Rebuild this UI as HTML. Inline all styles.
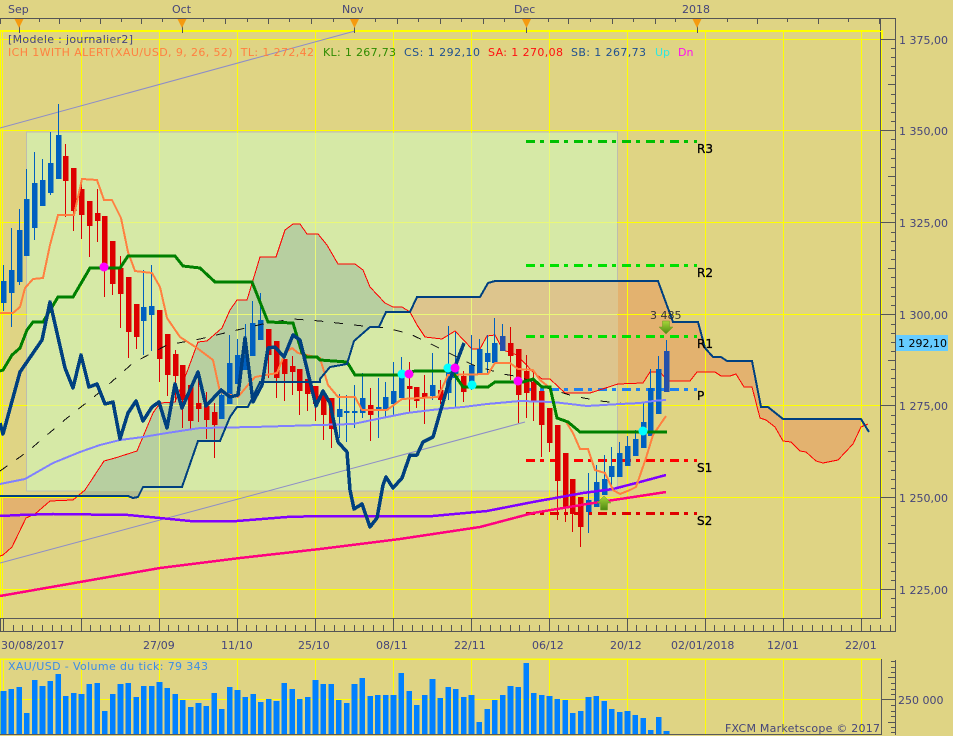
<!DOCTYPE html>
<html><head><meta charset="utf-8"><title>XAU/USD</title>
<style>html,body{margin:0;padding:0;background:#DFD484;overflow:hidden}svg{display:block}text{font-family:"DejaVu Sans","Liberation Sans",sans-serif;font-size:11px}polyline{shape-rendering:crispEdges}</style></head>
<body>
<svg width="953" height="736" viewBox="0 0 953 736" xmlns="http://www.w3.org/2000/svg">
<defs>
<clipPath id="inR"><rect x="27" y="132" width="591" height="359"/></clipPath>
<clipPath id="outR"><path clip-rule="evenodd" d="M0 31H881V618H0ZM27 132V491H618V132Z"/></clipPath>
<clipPath id="plot"><rect x="0" y="31" width="881" height="588"/></clipPath>
<linearGradient id="ag" x1="0" y1="0" x2="0" y2="1"><stop offset="0" stop-color="#a6d63a"/><stop offset="1" stop-color="#4d8a10"/></linearGradient>
<polygon id="cG" points="78,496 85,490 86,490 104,461 115,458 137,451 153,413 160,403 175,402 187,372 198,342 207,341 222,328 230,310 237,300 247,300 260,257 276,257 285,230 293,224 300,224 307,234 318,234 327,245 338,264 355,264 363,270 370,287 385,303 393,307 402,307 410,312 386,312 379,327 370,327 354,341 347,364 330,367 320,379 320,382 260,382 248,407 237,407 230,417 220,441 198,441 182,487 143,487 138,497 133,498 128,496"/>
<polygon id="cOL" points="0,496 78,496 73,500 50,501 35,514 26,518 12,547 3,555 0,556"/>
<polygon id="cOR" points="410,312 417,297 480,297 488,283 495,281 658,281 673,322 698,322 705,348 713,357 721,357 727,361 752,361 761,407 768,407 783,419 861,419 866,425 861,427 853,444 838,460 823,463 816,461 806,452 800,451 791,442 783,441 775,427 766,420 760,418 752,387 744,387 736,374 730,376 721,376 715,372 697,372 690,381 668,381 660,372 650,372 643,383 618,384 590,393 565,393 550,379 542,379 533,372 517,355 503,350 495,335 487,336 480,349 472,349 455,331 442,339 425,337 417,325"/>
</defs>
<rect width="953" height="736" fill="#DFD484"/>

<!-- overlay zone -->
<rect x="26.5" y="132" width="591" height="359" fill="#D6E9A6" stroke="#BDBDB0" stroke-width="1"/>

<!-- clouds -->
<g clip-path="url(#inR)"><use href="#cG" fill="#B7CFA0"/><use href="#cOL" fill="#DDC58D"/><use href="#cOR" fill="#DDC58D"/></g>
<g clip-path="url(#outR)"><use href="#cG" fill="#B3BD90"/><use href="#cOL" fill="#E3B26F"/><use href="#cOR" fill="#E3B26F"/></g>

<!-- grid -->
<g shape-rendering="crispEdges" fill="none">
<path stroke="#FFFF00" d="M0 39.5H880M0 130.5H880M0 222.5H880M0 314.5H880M0 405.5H880M0 497.5H880M0 589.5H880M.5 32V618M2.5 32V618M81.5 32V618M159.5 32V618M237.5 32V618M315.5 32V618M393.5 32V618M471.5 32V618M549.5 32V618M627.5 32V618M705.5 32V618M783.5 32V618M861.5 32V618"/>
<path stroke="#EAF878" d="M27 222.5H617M27 314.5H617M27 405.5H617M81.5 133V490M159.5 133V490M237.5 133V490M315.5 133V490M393.5 133V490M471.5 133V490M549.5 133V490"/>
<path stroke="#FFFF00" stroke-width="2" d="M0 31H882V40"/>
<path stroke="#FFFF00" d="M0 130.5H27"/>
<path stroke="#5A5A5A" d="M880.5 32V618.5H0"/>
<path stroke="#FFFF00" d="M881.5 32V618"/>
</g>

<!-- trend lines -->
<g fill="none" stroke="#8C8CC8" stroke-width="1">
<path d="M0 128L355 31"/>
<path d="M0 563L525 422"/>
</g>

<!-- pivot lines -->
<g fill="none" stroke-width="3" stroke-dasharray="9 5 4 6" shape-rendering="crispEdges">
<path stroke="#00C000" d="M526 141.5H697"/>
<path stroke="#00E000" d="M526 265.5H697"/>
<path stroke="#00E000" d="M526 336.5H697"/>
<path stroke="#1E80F0" d="M526 389.5H697"/>
<path stroke="#FF0000" d="M526 460.5H697"/>
<path stroke="#E00000" d="M526 513.5H697"/>
</g>

<!-- senkou A -->
<polyline fill="none" stroke="#FF0000" stroke-width="1" points="0,556 3,555 12,547 26,518 35,514 50,501 73,500 85,490 104,461 115,458 137,451 153,413 160,403 175,402 187,372 198,342 207,341 222,328 230,310 237,300 247,300 260,257 276,257 285,230 293,224 300,224 307,234 318,234 327,245 338,264 355,264 363,270 370,287 385,303 393,307 402,307 410,312 417,325 425,337 442,339 455,331 472,349 480,349 487,336 495,335 503,350 517,355 533,372 542,379 550,379 565,393 590,393 618,384 643,383 650,372 660,372 668,381 690,381 697,372 715,372 721,376 730,376 736,374 744,387 752,387 760,418 766,420 775,427 783,441 791,442 800,451 806,452 816,461 823,463 838,460 853,444 861,427 868,424"/>

<!-- candles: wicks -->
<g fill="none" shape-rendering="crispEdges" stroke-width="1">
<path stroke="#0060C0" d="M3.5 265V311M11.5 228V327M19.5 209V285M26.5 169V256M34.5 152V240M42.5 159V206M50.5 132V195M58.5 104V179M143.5 270V355M151.5 265V351M221.5 388V419M229.5 335V404M237.5 339V384M245.5 324V370M252.5 301V356M260.5 293V340M339.5 394V438M346.5 395V442M354.5 385V428M362.5 373V418M378.5 378V438M385.5 382V418M393.5 362V415M401.5 357V398M432.5 353V400M448.5 326V400M455.5 332V407M471.5 335V390M479.5 339V374M487.5 335V373M494.5 318V363M502.5 324V351M588.5 473V533M596.5 465V507M604.5 455V495M611.5 447V490M619.5 442V477M627.5 436V466M635.5 430V456M643.5 403V448M650.5 369V436M658.5 356V414M666.5 340V392"/>
<path stroke="#DD0000" d="M65.5 144V217M73.5 168V231M81.5 179V239M89.5 201V257M97.5 189V242M104.5 216V297M112.5 241V295M120.5 256V328M128.5 277V358M136.5 304V349M159.5 310V382M167.5 334V396M175.5 350V402M182.5 365V428M190.5 385V430M198.5 380V422M206.5 392V439M214.5 403V458M268.5 329V378M276.5 341V398M284.5 359V401M292.5 356V395M299.5 369V415M307.5 379V411M315.5 386V421M323.5 390V440M331.5 398V448M370.5 388V441M409.5 362V412M416.5 387V408M424.5 375V424M440.5 380V404M463.5 371V402M510.5 327V380M518.5 349V423M526.5 355V418M533.5 370V421M541.5 391V457M549.5 408V452M557.5 425V520M565.5 453V522M572.5 479V532M580.5 497V547"/>
</g>
<!-- candles: bodies -->
<g fill="none" shape-rendering="crispEdges" stroke-width="5.5">
<path stroke="#0060C0" d="M3.5 281V303M11.5 270V293M19.5 230V282M26.5 199V256M34.5 183V228M42.5 180V206M50.5 163V193M58.5 135V179M143.5 307V321M151.5 306V315M221.5 395V419M229.5 363V404M237.5 355V384M245.5 355V370M252.5 323V356M260.5 320V340M339.5 409V417M346.5 411V413M354.5 411V413M362.5 398V413M378.5 407V409M385.5 397V409M393.5 391V404M401.5 374V398M432.5 385V396M448.5 365V393M455.5 367V378M471.5 365V385M479.5 349V374M487.5 353V362M494.5 343V363M588.5 500V512M596.5 482V507M604.5 479V495M611.5 466V477M619.5 453V477M627.5 446V466M635.5 439V456M643.5 422V448M650.5 388V436M658.5 369V414"/>
<path stroke="#2550AA" d="M502.5 336V351M666.5 351V392"/>
<path stroke="#DD0000" d="M65.5 156V181M73.5 168V211M81.5 189V215M89.5 201V226M97.5 213V221M104.5 216V265M112.5 241V284M120.5 268V294M128.5 277V332M136.5 304V337M159.5 310V359M167.5 334V375M175.5 354V376M182.5 365V400M190.5 385V421M198.5 403V409M206.5 406V420M214.5 412V425M268.5 329V355M276.5 341V378M284.5 359V374M292.5 366V372M299.5 369V391M307.5 379V394M315.5 386V404M323.5 395V415M331.5 398V429M370.5 405V415M409.5 386V389M416.5 387V401M424.5 393V397M440.5 390V400M463.5 376V392M510.5 343V356M518.5 349V395M526.5 371V393M533.5 382V402M541.5 391V425M549.5 408V443M557.5 425V481M565.5 453V507M572.5 479V514M580.5 497V527"/>
</g>

<!-- dashed black -->
<polyline fill="none" stroke="#111" stroke-width="1" stroke-dasharray="9 11" points="0,471 27,452 67,418 100,392 133,363 167,345 200,339 233,331 267,323 293,319 320,321 363,326 387,328 410,334 433,345 453,355 473,365 503,374 520,377 547,388 573,396 600,401 637,405"/>

<!-- MAs -->
<polyline fill="none" stroke="#8080FF" stroke-width="2" points="0,484 25,479 53,463 80,452 100,445 120,440 143,437 167,433 200,428 253,427 320,425 353,424 377,419 407,413 440,409 463,407 487,404 520,401 553,402 587,406 620,404 640,403 653,401 666,400"/>
<polyline fill="none" stroke="#8000FF" stroke-width="2.5" points="0,516 20,515 53,514 128,515 160,518 190,521 237,521 287,517 320,516 433,516 487,511 533,502 583,493 613,489 640,482 666,475"/>
<polyline fill="none" stroke="#FF0080" stroke-width="2.5" points="0,596 80,582 160,568 240,558 320,549 400,539 480,527 533,513 587,504 640,496 666,492"/>

<!-- Tenkan -->
<polyline fill="none" stroke="#FF8040" stroke-width="2" points="0,313 13,313 20,307 25,288 33,279 43,278 50,245 58,215 74,215 80,188 82,179 97,180 104,200 112,200 121,218 128,252 135,271 152,273 160,287 167,318 180,337 197,348 213,360 220,392 238,397 248,385 255,377 277,373 285,353 292,348 298,353 320,358 328,385 338,397 355,397 362,410 387,410 402,399 438,397 448,375 488,374 495,363 510,363 518,369 533,370 540,380 550,388 557,418 565,420 573,433 580,449 588,449 595,470 605,473 613,490 620,494 630,490 636,487 646,458 653,435 666,416"/>
<!-- Kijun -->
<polyline fill="none" stroke="#008000" stroke-width="3" points="0,371 3,370 12,355 20,348 27,330 33,322 43,322 58,297 73,297 90,268 120,268 128,256 175,256 183,266 200,268 215,282 252,282 268,322 293,323 302,353 307,357 317,357 320,360 347,362 355,375 400,375 415,371 452,371 463,387 488,387 495,382 523,382 533,379 542,387 550,387 557,418 568,422 580,432 667,432"/>
<!-- Senkou B -->
<polyline fill="none" stroke="#004080" stroke-width="2" points="0,496 128,496 133,498 138,497 143,487 182,487 198,441 220,441 230,417 237,407 248,407 260,382 320,382 320,379 330,367 347,364 354,341 370,327 379,327 386,312 410,312 417,297 480,297 488,283 495,281 658,281 673,322 698,322 705,348 713,357 721,357 727,361 752,361 761,407 768,407 783,419 861,419 869,432"/>
<!-- Chikou -->
<polyline fill="none" stroke="#004080" stroke-width="3.5" stroke-linejoin="round" points="0,423 3,434 20,372 42,340 50,302 65,368 73,388 81,355 89,387 97,384 105,404 113,402 120,439 128,413 136,401 143,421 152,407 159,402 167,428 175,384 182,408 198,372 206,406 221,390 230,397 238,395 245,338 253,402 262,385 268,348 275,347 284,357 293,335 300,340 316,406 323,391 330,403 338,442 347,452 350,490 354,509 362,504 370,527 377,518 383,485 386,477 393,488 402,478 410,455 417,455 423,442 433,437 448,385 464,343"/>

<!-- signal dots -->
<circle cx="104" cy="267" r="4.5" fill="#FF00FF"/>
<circle cx="402" cy="374" r="4.5" fill="#00FFFF"/>
<circle cx="409" cy="374" r="4.5" fill="#FF00FF"/>
<circle cx="448" cy="368" r="4.5" fill="#00FFFF"/>
<circle cx="455" cy="368" r="4.5" fill="#FF00FF"/>
<circle cx="472" cy="385" r="4.5" fill="#00FFFF"/>
<circle cx="518" cy="381" r="4.5" fill="#FF00FF"/>
<circle cx="643" cy="431" r="4.5" fill="#00FFFF"/>

<!-- arrows -->
<path d="M604 496L611 503H607.5V510H600.5V503H597Z" fill="url(#ag)" stroke="#6a9a20" stroke-width=".5"/>
<path d="M666 334L673 327H669.5V321H662.5V327H659Z" fill="url(#ag)" stroke="#6a9a20" stroke-width=".5"/>
<text x="650" y="319" fill="#333">3 485</text>

<!-- pivot labels -->
<g fill="#000" stroke="#000" stroke-width=".3" style="font-size:12px">
<text x="697" y="153" style="font-size:12px">R3</text>
<text x="697" y="277" style="font-size:12px">R2</text>
<text x="697" y="348" style="font-size:12px">R1</text>
<text x="697" y="400" style="font-size:12px">P</text>
<text x="697" y="472" style="font-size:12px">S1</text>
<text x="697" y="525" style="font-size:12px">S2</text>
</g>

<!-- legend -->
<text x="8" y="43" fill="#44447E" textLength="125">[Modele : journalier2]</text>
<text x="8" y="56" fill="#FF8040" textLength="306">ICH 1WITH ALERT(XAU/USD, 9, 26, 52)&#160; TL: 1 272,42</text>
<text x="323" y="56" fill="#2E8B00" textLength="73">KL: 1 267,73</text>
<text x="404" y="56" fill="#1F5090" textLength="76">CS: 1 292,10</text>
<text x="488" y="56" fill="#FF1010" textLength="75">SA: 1 270,08</text>
<text x="571" y="56" fill="#1F5090" textLength="75">SB: 1 267,73</text>
<text x="655" y="56" fill="#30E8E0">Up</text>
<text x="678" y="56" fill="#FF10F0">Dn</text>

<!-- top axis -->
<g shape-rendering="crispEdges" fill="none" stroke="#555">
<path d="M0 18.5H895.5V631.5H0M.5 18V24M880.5 18V31"/>
<path d="M59.5 18V24M100.5 18V24M141.5 18V24M182.5 18V33M225.5 18V24M268.5 18V24M311.5 18V24M354.5 18V33M397.5 18V24M440.5 18V24M483.5 18V24M526.5 18V33M568.5 18V24M612.5 18V24M655.5 18V24M697.5 18V33M757.5 18V24M818.5 18V24M879.5 18V24M19.5 18V33"/>
<path d="M39.5 18V22M80.5 18V22M121.5 18V22M162.5 18V22M203.5 18V22M247.5 18V22M289.5 18V22M333.5 18V22M375.5 18V22M418.5 18V22M461.5 18V22M504.5 18V22M548.5 18V22M590.5 18V22M633.5 18V22M675.5 18V22M727.5 18V22M787.5 18V22M848.5 18V22"/>
</g>
<g fill="#F59A10">
<path d="M14.5 19H23.5L19 28Z"/><path d="M177.5 19H186.5L182 28Z"/><path d="M350 19H359L354.5 28Z"/><path d="M522 19H531L526.5 28Z"/><path d="M692.5 19H701.5L697 28Z"/>
</g>
<g fill="#45457A">
<text x="8" y="13">Sep</text><text x="172" y="13">Oct</text><text x="342" y="13">Nov</text><text x="514" y="13">Dec</text><text x="682" y="13">2018</text>
</g>

<!-- right axis ticks -->
<g shape-rendering="crispEdges" fill="none" stroke="#555">
<path d="M881 39.5H895M881 130.5H895M881 222.5H895M881 314.5H895M881 405.5H895M881 497.5H895M881 589.5H895"/>
<path d="M888 84.5H895M888 176.5H895M888 268.5H895M888 360.5H895M888 451.5H895M888 543.5H895"/>
<path d="M891 48.5h4M891 57.5h4M891 66.5h4M891 75.5h4M891 94.5h4M891 103.5h4M891 112.5h4M891 121.5h4M891 139.5h4M891 149.5h4M891 158.5h4M891 167.5h4M891 185.5h4M891 195.5h4M891 204.5h4M891 213.5h4M891 232.5h4M891 241.5h4M891 250.5h4M891 259.5h4M891 277.5h4M891 287.5h4M891 296.5h4M891 305.5h4M891 324.5h4M891 333.5h4M891 342.5h4M891 351.5h4M891 369.5h4M891 378.5h4M891 387.5h4M891 396.5h4M891 415.5h4M891 424.5h4M891 433.5h4M891 442.5h4M891 461.5h4M891 470.5h4M891 479.5h4M891 488.5h4M891 507.5h4M891 516.5h4M891 525.5h4M891 534.5h4M891 552.5h4M891 562.5h4M891 571.5h4M891 580.5h4M891 598.5h4M891 607.5h4M891 616.5h4"/>
</g>
<g fill="#45457A">
<text x="899" y="44">1 375,00</text>
<text x="899" y="135">1 350,00</text>
<text x="899" y="227">1 325,00</text>
<text x="899" y="319">1 300,00</text>
<text x="899" y="410">1 275,00</text>
<text x="899" y="502">1 250,00</text>
<text x="899" y="594">1 225,00</text>
</g>
<rect x="896" y="335" width="52" height="16" fill="#66CCFF"/>
<text x="898" y="347" fill="#000">1 292,10</text>

<!-- bottom axis ticks -->
<g shape-rendering="crispEdges" fill="none" stroke="#555">
<path d="M.5 618V631M3.5 618V631M81.5 618V631M159.5 618V631M237.5 618V631M315.5 618V631M393.5 618V631M471.5 618V631M549.5 618V631M627.5 618V631M705.5 618V631M783.5 618V631M861.5 618V631"/>
<path d="M13.5 625v6M22.5 625v6M32.5 625v6M42.5 625v6M52.5 625v6M61.5 625v6M71.5 625v6M90.5 625v6M100.5 625v6M110.5 625v6M120.5 625v6M129.5 625v6M139.5 625v6M149.5 625v6M168.5 625v6M178.5 625v6M188.5 625v6M198.5 625v6M207.5 625v6M217.5 625v6M227.5 625v6M246.5 625v6M256.5 625v6M266.5 625v6M276.5 625v6M285.5 625v6M295.5 625v6M305.5 625v6M324.5 625v6M334.5 625v6M344.5 625v6M354.5 625v6M363.5 625v6M373.5 625v6M383.5 625v6M402.5 625v6M412.5 625v6M422.5 625v6M432.5 625v6M441.5 625v6M451.5 625v6M461.5 625v6M480.5 625v6M490.5 625v6M500.5 625v6M510.5 625v6M519.5 625v6M529.5 625v6M539.5 625v6M558.5 625v6M568.5 625v6M578.5 625v6M588.5 625v6M597.5 625v6M607.5 625v6M617.5 625v6M636.5 625v6M646.5 625v6M656.5 625v6M666.5 625v6M675.5 625v6M685.5 625v6M695.5 625v6M714.5 625v6M724.5 625v6M734.5 625v6M744.5 625v6M753.5 625v6M763.5 625v6M773.5 625v6M792.5 625v6M802.5 625v6M812.5 625v6M822.5 625v6M831.5 625v6M841.5 625v6M851.5 625v6M870.5 625v6M880.5 625v6M890.5 625v6"/>
</g>
<g fill="#45457A">
<text x="1" y="649">30/08/2017</text>
<text x="143" y="649">27/09</text>
<text x="221" y="649">11/10</text>
<text x="298" y="649">25/10</text>
<text x="376" y="649">08/11</text>
<text x="454" y="649">22/11</text>
<text x="532" y="649">06/12</text>
<text x="610" y="649">20/12</text>
<text x="671" y="649">02/01/2018</text>
<text x="767" y="649">12/01</text>
<text x="845" y="649">22/01</text>
</g>

<!-- volume panel -->
<g shape-rendering="crispEdges" fill="none">
<path stroke="#FFFF00" d="M0 699.5H880M.5 660V734M3.5 660V734M81.5 660V734M159.5 660V734M237.5 660V734M315.5 660V734M393.5 660V734M471.5 660V734M549.5 660V734M627.5 660V734M705.5 660V734M783.5 660V734M861.5 660V734"/>
<path stroke="#FFFF00" stroke-width="1.5" d="M0 659.2H881"/>
<path stroke="#5A5A5A" d="M881.5 659V734.5H0"/>
<path stroke="#555" d="M895.5 660V735M881 699.5H895M888 677.5H895M888 722.5H895M891 661.5h4M891 667.5h4M891 672.5h4M891 683.5h4M891 689.5h4M891 694.5h4M891 705.5h4M891 711.5h4M891 716.5h4M891 727.5h4M891 732.5h4"/>
</g>
<path fill="none" stroke="#0080FF" stroke-width="5.6" shape-rendering="crispEdges" d="M3.5 691V734M11.3 689V734M19.1 687V734M26.9 713V734M34.7 680V734M42.5 686V734M50.3 681V734M58.1 674V734M65.9 696V734M73.7 693V734M81.5 694V734M89.3 684V734M97.1 683V734M104.9 711V734M112.7 694V734M120.5 684V734M128.3 683V734M136.1 697V734M143.9 686V734M151.7 686V734M159.5 682V734M167.3 688V734M175.1 694V734M182.9 700V734M190.7 707V734M198.5 703V734M206.3 706V734M214.1 693V734M221.9 709V734M229.7 687V734M237.5 690V734M245.3 697V734M253.1 694V734M260.9 702V734M268.7 699V734M276.5 701V734M284.3 683V734M292.1 689V734M299.9 699V734M307.7 697V734M315.5 680V734M323.3 684V734M331.1 684V734M338.9 700V734M346.7 703V734M354.5 684V734M362.3 678V734M370.1 696V734M377.9 695V734M385.7 695V734M393.5 695V734M401.3 673V734M409.1 691V734M416.9 705V734M424.7 695V734M432.5 679V734M440.3 698V734M448.1 687V734M455.9 689V734M463.7 697V734M471.5 695V734M479.3 722V734M487.1 709V734M494.9 700V734M502.7 695V734M510.5 686V734M518.3 687V734M526.1 663V734M533.9 693V734M541.7 695V734M549.5 696V734M557.3 699V734M565.1 700V734M572.9 713V734M580.7 711V734M588.5 697V734M596.3 696V734M604.1 701V734M611.9 709V734M619.7 712V734M627.5 711V734M635.3 715V734M643.1 718V734M650.9 730V734M658.7 717V734M666.5 731V734"/>
<text x="8" y="670" fill="#3C8CE6" textLength="200">XAU/USD - Volume du tick: 79 343</text>
<text x="898" y="704" fill="#45457A">250 000</text>
<text x="725" y="732" fill="#45457A" textLength="155">FXCM Marketscope © 2017</text>
</svg>
</body></html>
